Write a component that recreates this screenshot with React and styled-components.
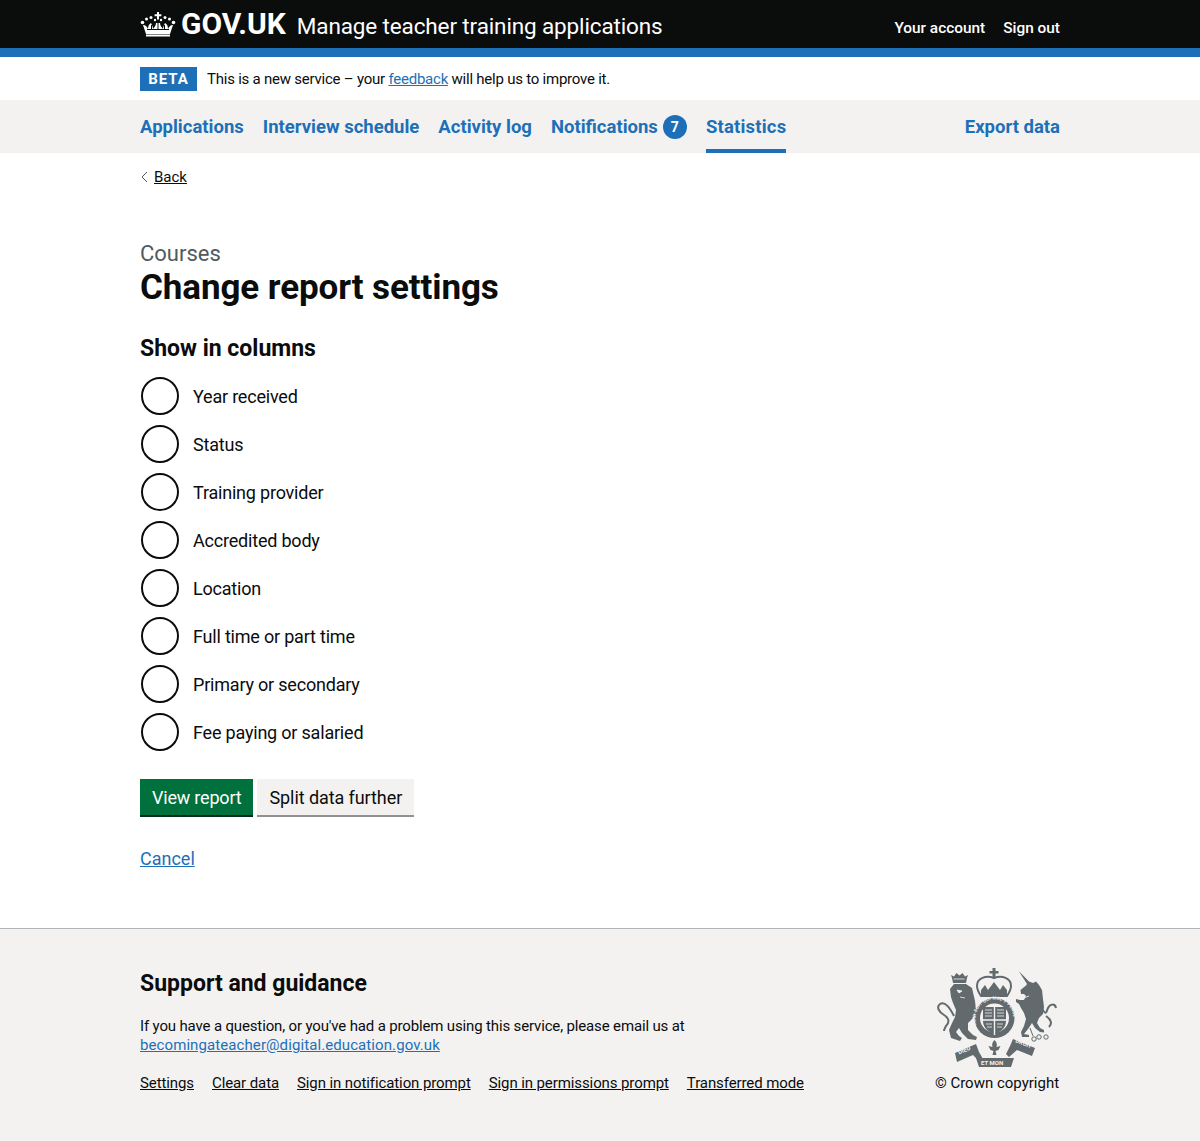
import React from 'react';
import styled, { createGlobalStyle } from 'styled-components';

const Global = createGlobalStyle`
  html, body { margin: 0; padding: 0; background: #fff; }
  body { font-family: Roboto, "Liberation Sans", sans-serif; color: #0b0c0c; }
  * { box-sizing: border-box; }
`;

const Container = styled.div`
  width: 920px;
  margin: 0 auto;
`;

const HeaderBar = styled.header`
  background: #0b0c0c;
  color: #fff;
  height: 57px;
  border-bottom: 9px solid #1d70b8;
`;

const HeaderRow = styled(Container)`
  display: flex;
  align-items: center;
  justify-content: space-between;
  height: 48px;
`;

const Brand = styled.div`
  display: flex;
  align-items: center;
`;

const Logo = styled.span`
  font-size: 30px;
  font-weight: 700;
  margin: -2px 11px 0 5px;
`;

const ServiceName = styled.span`
  font-size: 22.5px;
  letter-spacing: -0.13px;
  margin-top: 3px;
`;

const AccountLinks = styled.div`
  display: flex;
  gap: 18px;
  font-size: 15.4px;
  font-weight: 500;
  padding-top: 8px;
`;

const PhaseRow = styled(Container)`
  display: flex;
  align-items: center;
  height: 43px;
  font-size: 15px;
  letter-spacing: -0.23px;
`;

const Tag = styled.strong`
  background: #1d70b8;
  color: #fff;
  font-size: 15px;
  letter-spacing: 1px;
  width: 57px;
  height: 24px;
  display: flex;
  align-items: center;
  justify-content: center;
  margin-right: 10px;
`;

const Link = styled.a`
  color: ${p => p.$plain ? '#0b0c0c' : '#1d70b8'};
  text-decoration: underline;
`;

const EmailLink = styled(Link)`
  letter-spacing: 0.09px;
`;

const NavBar = styled.nav`
  background: #f3f2f1;
  height: 53px;
`;

const NavRow = styled(Container)`
  display: flex;
  height: 53px;
  gap: 19px;
`;

const NavItem = styled.a`
  display: flex;
  align-items: center;
  gap: 5px;
  font-size: 18.5px;
  font-weight: 700;
  color: #1d70b8;
  height: 53px;
  border-bottom: 4px solid ${p => p.$active ? '#1d70b8' : 'transparent'};
  padding-top: 4px;
  letter-spacing: ${p => p.$active ? '0.2px' : '0'};
  margin-left: ${p => p.$push ? 'auto' : '0'};
`;

const Badge = styled.span`
  width: 24px;
  height: 24px;
  border-radius: 50%;
  background: #1d70b8;
  color: #fff;
  font-size: 14px;
  font-weight: 700;
  display: flex;
  align-items: center;
  justify-content: center;
`;

const BackRow = styled.div`
  display: flex;
  align-items: center;
  gap: 6px;
  height: 20px;
  margin-top: 14px;
  font-size: 15px;
`;

const Main = styled.main`
  padding-top: 53px;
`;

const Caption = styled.div`
  font-size: 22px;
  line-height: 28px;
  color: #505a5f;
`;

const Title = styled.h1`
  margin: 0;
  padding-top: 1px;
  font-size: 35px;
  line-height: 38px;
  font-weight: 700;
  letter-spacing: -0.1px;
`;

const Legend = styled.h2`
  margin: 27px 0 0;
  font-size: 23px;
  line-height: 30px;
  font-weight: 700;
`;

const Options = styled.div`
  margin-top: 12px;
  display: flex;
  flex-direction: column;
  gap: 8px;
`;

const Option = styled.label`
  display: flex;
  align-items: center;
  gap: 14px;
  height: 40px;
  font-size: 18px;
  letter-spacing: -0.2px;
`;

const Radio = styled.span`
  width: 38px;
  height: 38px;
  border: 2px solid #0b0c0c;
  border-radius: 50%;
  margin: -1px 0 0 1px;
  background: #fff;
`;

const Buttons = styled.div`
  display: flex;
  gap: 4px;
  margin-top: 27px;
`;

const Button = styled.button`
  height: 38px;
  border: 0;
  border-bottom: 2px solid ${p => p.$primary ? '#002d18' : '#929191'};
  background: ${p => p.$primary ? '#00703c' : '#f3f2f1'};
  color: ${p => p.$primary ? '#fff' : '#0b0c0c'};
  font: inherit;
  font-size: 18px;
  letter-spacing: ${p => p.$primary ? '-0.2px' : '-0.08px'};
  padding: 0 12px;
`;

const CancelRow = styled.div`
  margin-top: 30px;
  font-size: 18px;
  line-height: 24px;
`;

const FooterBar = styled.footer`
  margin-top: 57px;
  background: #f3f2f1;
  border-top: 1px solid #b1b4b6;
  height: 214px;
  padding-top: 39px;
`;

const FooterRow = styled(Container)`
  display: flex;
  justify-content: space-between;
`;

const FooterTitle = styled.h2`
  margin: 0;
  padding-top: 1px;
  font-size: 23px;
  line-height: 30px;
  font-weight: 700;
`;

const FooterText = styled.p`
  margin: 18px 0 0;
  font-size: 15px;
  letter-spacing: -0.15px;
  line-height: 19px;
`;

const FooterLinks = styled.div`
  display: flex;
  gap: 18px;
  margin-top: 19px;
  font-size: 15px;
  letter-spacing: -0.1px;
`;

const Copyright = styled.div`
  display: flex;
  flex-direction: column;
  align-items: center;
  font-size: 15px;
  margin-top: -2px;
  gap: 6px;
`;

const ArmsSvg = styled.svg`
  margin-right: 2px;
`;

const Crown = () => (
  <svg width="36" height="26" viewBox="0 0 36 26" fill="#fff">
    <path d="M17 1h2v2.200h2.400v2H19v3.200h-2V5.200h-2.400v-2H17z" />
    <circle cx="2.500" cy="11.500" r="1.800" />
    <circle cx="6.500" cy="8" r="1.500" />
    <circle cx="11" cy="6.500" r="1.500" />
    <circle cx="15" cy="9" r="1.200" />
    <circle cx="21" cy="9" r="1.200" />
    <circle cx="25" cy="6.500" r="1.500" />
    <circle cx="29.500" cy="8" r="1.500" />
    <circle cx="33.500" cy="11.500" r="1.800" />
    <path d="M3 14c3 0 4 2 5 4 0-3 1-5 3-6 1 2 2 4 2 6 1-2 3-3 3-6h4c0 3 2 4 3 6 0-2 1-4 2-6 2 1 3 3 3 6 1-2 2-4 5-4l-3 9H6z" />
    <path d="M7 18.500h22M11.500 14v4M18 12v6M24.500 14v4" stroke="#0b0c0c" strokeWidth="1" />
    <rect x="6" y="23.500" width="24" height="2" />
  </svg>
);

const Chevron = () => (
  <svg width="8" height="12" viewBox="0 0 8 12" fill="none" stroke="#505a5f" strokeWidth="1">
    <path d="M7 1 2 6l5 5" />
  </svg>
);

const Arms = () => (
  <ArmsSvg width="124" height="102" viewBox="0 0 124 102" fill="#626a6e">
    <defs>
      <path id="garter" d="M43 60a19 19 0 1 1 35 0" />
    </defs>
    {/* lion */}
    <path d="M19 17l-1-5-1-3 3 1.500 2.500-3.500 3 2.500 3-2.500 2.500 3.500 3-1.500-1 3-1 5z" />
    <path d="M19.500 13h11" stroke="#f3f2f1" strokeWidth="0.800" />
    <path d="M20 18h12l6 4 3 13 1 9-3 8-5 5v7l5 5 4 2-1 3-8-1-6-6-3-5-3 4 3 4 3 2-2 3-9-3-2-8 3-7 3-6 1-7-3-7-2-6-1-8z" />
    <path d="M23 24l5 1-3 2zM26 31l5 1" stroke="#f3f2f1" strokeWidth="0.800" fill="#f3f2f1" />
    <path d="M20 50C16 42 11 35 6 38 2 41 5 46 10 49c5 3 6 7 2 11-1 2-2 3-2 5" fill="none" stroke="#626a6e" strokeWidth="2" />
    {/* unicorn */}
    <path d="M84.700 5 95 15.500l4 1.500 3-1.500 3 3.500 3 5 1 9 1 8-1 7-4 4-2 5 3 5 4 2v2.500l-4-.5-5-4-3-5-4 6-4 5 5 1v2h-7l-1-5 3-6 2-7-2-6-3-5-2-4-3-2v-3l4 1h4l2-4-2-2h-3l-.5-4 5.500-4.500 1-1.500z" />
    <path d="M87 33l8-3" stroke="#f3f2f1" strokeWidth="0.800" />
    <path d="M108 43c5 7 4 3 6-1 2-4 7-5 8 0M112 50c6 4 6 8 3 11" fill="none" stroke="#626a6e" strokeWidth="2" />
    <g fill="none" stroke="#626a6e" strokeWidth="1">
      <circle cx="100" cy="73" r="2.200" />
      <circle cx="105" cy="71" r="2.200" />
      <circle cx="112" cy="71" r="2.200" />
      <path d="M96 62l3 8" />
    </g>
    {/* royal crown */}
    <path d="M58.500 2h3v3h3v2.500h-3V11h-3V7.500h-3V5h3z" />
    <path d="M60 12c8-3 17 0 17 8 0 4-2 7-4 10H47c-2-3-4-6-4-10 0-8 9-11 17-8z" fill="none" stroke="#626a6e" strokeWidth="2" />
    <path d="M47 24l4-5 3 5 6-8 6 8 3-5 4 5v7H47z" />
    {/* garter and shield */}
    <circle cx="60.500" cy="52" r="20" fill="#626a6e" />
    <circle cx="60.500" cy="52" r="14.500" fill="#f3f2f1" />
    <text fontSize="4.300" fontFamily="Roboto, sans-serif" fill="#f3f2f1" fontWeight="700" letterSpacing="0.300">
      <textPath href="#garter" startOffset="1">HONI SOIT QUI MAL Y PENSE</textPath>
    </text>
    <path d="M49 41h23v14c0 7-6 11-11.500 14C55 66 49 62 49 55z" />
    <path d="M60.500 41v28M49 54h23" stroke="#f3f2f1" strokeWidth="1.400" />
    <path d="M51 44h7M51 47h7M51 50h7M63 44h7M63 47h7M63 50h7M52 58h6M53 61h5M63 58h6M63 61h5" stroke="#f3f2f1" strokeWidth="0.800" />
    {/* motto scroll */}
    <path d="M21 87l21-9 3 8 4 7-3 3-7-7-16 7zM101 82l-22-9-3 7-4 8 3 3 8-7 15 6z" />
    <path d="M42 92h38l-3 9H45z" />
    <path d="M60.500 74c2 2 3 4 2 7l4-1-2 4-3 1 1 4h-4l1-4-3-1-2-4 4 1c-1-3 0-5 2-7z" />
    <g fontFamily="Roboto, sans-serif" fontWeight="700" fontSize="6" fill="#f3f2f1">
      <text transform="translate(25 88.500) rotate(-22)">DIEU</text>
      <text transform="translate(81 76) rotate(22)">DROIT</text>
      <text x="47" y="99">ET MON</text>
    </g>
  </ArmsSvg>
);

export default function App() {
  const columns = ['Year received', 'Status', 'Training provider', 'Accredited body', 'Location', 'Full time or part time', 'Primary or secondary', 'Fee paying or salaried'];
  const footerLinks = ['Settings', 'Clear data', 'Sign in notification prompt', 'Sign in permissions prompt', 'Transferred mode'];
  return (
    <>
      <Global />
      <HeaderBar>
        <HeaderRow>
          <Brand>
            <Crown />
            <Logo>GOV.UK</Logo>
            <ServiceName>Manage teacher training applications</ServiceName>
          </Brand>
          <AccountLinks>
            <span>Your account</span>
            <span>Sign out</span>
          </AccountLinks>
        </HeaderRow>
      </HeaderBar>
      <PhaseRow>
        <Tag>BETA</Tag>
        <span>This is a new service – your <Link href="#">feedback</Link> will help us to improve it.</span>
      </PhaseRow>
      <NavBar>
        <NavRow>
          <NavItem>Applications</NavItem>
          <NavItem>Interview schedule</NavItem>
          <NavItem>Activity log</NavItem>
          <NavItem>Notifications <Badge>7</Badge></NavItem>
          <NavItem $active>Statistics</NavItem>
          <NavItem $push>Export data</NavItem>
        </NavRow>
      </NavBar>
      <Container>
        <BackRow>
          <Chevron />
          <Link $plain href="#">Back</Link>
        </BackRow>
        <Main>
          <Caption>Courses</Caption>
          <Title>Change report settings</Title>
          <Legend>Show in columns</Legend>
          <Options>
            {columns.map(c => (
              <Option key={c}><Radio />{c}</Option>
            ))}
          </Options>
          <Buttons>
            <Button $primary>View report</Button>
            <Button>Split data further</Button>
          </Buttons>
          <CancelRow><Link href="#">Cancel</Link></CancelRow>
        </Main>
      </Container>
      <FooterBar>
        <FooterRow>
          <div>
            <FooterTitle>Support and guidance</FooterTitle>
            <FooterText>
              If you have a question, or you've had a problem using this service, please email us at<br />
              <EmailLink href="#">becomingateacher@digital.education.gov.uk</EmailLink>
            </FooterText>
            <FooterLinks>
              {footerLinks.map(l => <Link $plain href="#" key={l}>{l}</Link>)}
            </FooterLinks>
          </div>
          <Copyright>
            <Arms />
            <span>© Crown copyright</span>
          </Copyright>
        </FooterRow>
      </FooterBar>
    </>
  );
}
